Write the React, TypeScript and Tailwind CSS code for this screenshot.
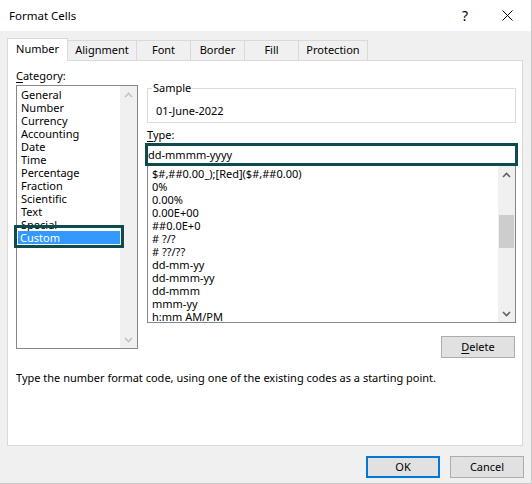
import React from "react";

function Chevron({ up, color }: { up: boolean; color: string }) {
  return (
    <svg width="9" height="6" viewBox="0 0 9 6">
      <path
        d={up ? "M1 5 L4.5 1.5 L8 5" : "M1 1 L4.5 4.5 L8 1"}
        fill="none"
        stroke={color}
        strokeWidth="1.6"
      />
    </svg>
  );
}

export default function App() {
  const cats = [
    "General",
    "Number",
    "Currency",
    "Accounting",
    "Date",
    "Time",
    "Percentage",
    "Fraction",
    "Scientific",
    "Text",
    "Special",
  ];
  const fmts = [
    "$#,##0.00_);[Red]($#,##0.00)",
    "0%",
    "0.00%",
    "0.00E+00",
    "##0.0E+0",
    "# ?/?",
    "# ??/??",
    "dd-mm-yy",
    "dd-mmm-yy",
    "dd-mmm",
    "mmm-yy",
    "h:mm AM/PM",
  ];
  const tabs: { label: string; w: string }[] = [
    { label: "Alignment", w: "w-[70px]" },
    { label: "Font", w: "w-[55px]" },
    { label: "Border", w: "w-[55px]" },
    { label: "Fill", w: "w-[55px]" },
    { label: "Protection", w: "w-[70px]" },
  ];
  return (
    <div className="w-[532px] h-[484px] bg-[#f0f0f0] flex flex-col border-r border-b border-[#c8c8c8] text-[11px] text-black font-['Noto_Sans','Liberation_Sans',sans-serif]">
      {/* Title bar */}
      <div className="h-[31px] shrink-0 bg-white flex items-center">
        <span className="ml-[9px] text-[11.5px] leading-[16px]">Format Cells</span>
        <div className="flex-1" />
        <span className="text-[14px] leading-[16px] mr-[34px]">?</span>
        <svg width="11" height="11" viewBox="0 0 11 11" className="mr-[18px]">
          <path d="M0.5 0.5 L10.5 10.5 M10.5 0.5 L0.5 10.5" stroke="#000" strokeWidth="1" />
        </svg>
      </div>

      {/* Tabs */}
      <div className="flex items-end h-[22px] mt-[7px] ml-[7px] relative z-10">
        <div className="w-[61px] h-[23px] -mb-[1px] bg-white border border-b-0 border-[#d9d9d9] flex items-center justify-center relative z-10 pb-[2px]">
          Number
        </div>
        {tabs.map((t) => (
          <div
            key={t.label}
            className={`${t.w} h-[20px] -ml-[1px] border border-b-0 border-[#d9d9d9] bg-[#f0f0f0] flex items-center justify-center`}
          >
            {t.label}
          </div>
        ))}
      </div>

      {/* Panel */}
      <div className="ml-[7px] w-[516px] h-[386px] shrink-0 bg-white border border-[#d9d9d9] flex flex-col">
        <div className="flex pl-[8px] pt-[7px]">
          {/* Left column */}
          <div className="w-[122px] flex flex-col">
            <div className="leading-[16px] h-[16px]">
              <span className="underline underline-offset-2">C</span>ategory:
            </div>
            <div className="mt-[1px] h-[264px] border border-[#828790] flex">
              <div className="flex-1 pt-[2px] pl-[1px] flex flex-col">
                {cats.map((c) => (
                  <div key={c} className="h-[13px] leading-[13px] pl-[3px] whitespace-nowrap">
                    {c}
                  </div>
                ))}
                <div className="relative h-[13px] leading-[13px] pl-[2px] bg-[#3399ff] text-white">
                  Custom
                  <div className="absolute -left-[4px] -right-[4px] -top-[6px] -bottom-[4px] border-[3px] border-[#0f4a4c] z-10" />
                </div>
              </div>
              <div className="w-[17px] bg-[#f0f0f0] flex flex-col justify-between">
                <div className="h-[17px] flex items-center justify-center">
                  <Chevron up color="#c2c2c2" />
                </div>
                <div className="h-[17px] flex items-center justify-center">
                  <Chevron up={false} color="#c2c2c2" />
                </div>
              </div>
            </div>
          </div>

          {/* Right column */}
          <div className="ml-[9px] w-[369px] flex flex-col">
            <div className="mt-[20px] h-[35px] border border-[#dcdcdc] relative">
              <span className="absolute left-[4px] -top-[9px] bg-white px-[1px] leading-[16px]">Sample</span>
              <div className="pt-[14px] pl-[8px] leading-[16px]">01-June-2022</div>
            </div>
            <div className="mt-[4px] leading-[16px] h-[16px]">
              <span className="underline underline-offset-2">T</span>ype:
            </div>
            <div className="h-[23px] -mx-[2px] border-[3px] border-[#0f4a4c] leading-[17px] pl-[0px]">
              dd-mmmm-yyyy
            </div>
            <div className="h-[157px] border border-t-0 border-[#828790] flex overflow-hidden">
              <div className="flex-1 pt-[1px] pl-[4px] flex flex-col overflow-hidden">
                {fmts.map((f) => (
                  <div key={f} className="h-[13px] leading-[13px] shrink-0 whitespace-nowrap">
                    {f}
                  </div>
                ))}
              </div>
              <div className="w-[17px] bg-[#f0f0f0] flex flex-col">
                <div className="h-[17px] flex items-center justify-center">
                  <Chevron up color="#606060" />
                </div>
                <div className="mt-[32px] ml-[1px] w-[15px] h-[33px] bg-[#cdcdcd]" />
                <div className="flex-1" />
                <div className="h-[17px] flex items-center justify-center">
                  <Chevron up={false} color="#606060" />
                </div>
              </div>
            </div>
            <div className="mt-[13px] self-end mr-[1px] w-[74px] h-[22px] bg-[#e1e1e1] border border-[#adadad] flex items-center justify-center">
              <span>
                <span className="underline underline-offset-2">D</span>elete
              </span>
            </div>
          </div>
        </div>
        <div className="mt-[12px] pl-[8px] leading-[16px] whitespace-nowrap">
          Type the number format code, using one of the existing codes as a starting point.
        </div>
      </div>

      {/* Buttons */}
      <div className="mt-[10px] flex justify-end gap-[10px] pr-[7px]">
        <div className="w-[74px] h-[22px] bg-[#e1e1e1] border-2 border-[#0078d7] flex items-center justify-center">
          OK
        </div>
        <div className="w-[74px] h-[22px] bg-[#e1e1e1] border border-[#adadad] flex items-center justify-center">
          Cancel
        </div>
      </div>
    </div>
  );
}
